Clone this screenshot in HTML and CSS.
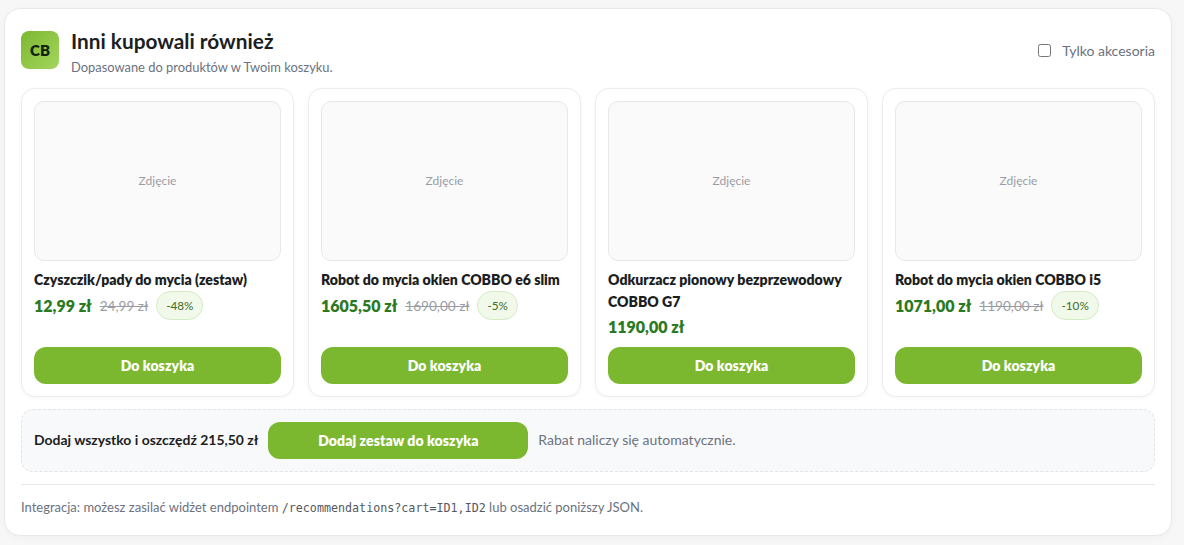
FILE: index.html
```html
<!DOCTYPE html>
<html lang="pl">
<head>
<meta charset="utf-8">
<title>Inni kupowali również</title>
<link rel="stylesheet" href="styles.css">
</head>
<body>
<section class="widget">
  <header class="head">
    <div class="logo">CB</div>
    <div class="head-text">
      <h2 class="title">Inni kupowali również</h2>
      <p class="sub">Dopasowane do produktów w Twoim koszyku.</p>
    </div>
    <label class="filter"><input type="checkbox" class="check"><span>Tylko akcesoria</span></label>
  </header>
  <div class="grid">
    <article class="card">
      <div class="photo">Zdjęcie</div>
      <h3 class="name">Czyszczik/pady do mycia (zestaw)</h3>
      <div class="prices"><span class="price">12,99 zł</span><s class="old">24,99 zł</s><span class="badge">-48%</span></div>
      <button class="btn">Do koszyka</button>
    </article>
    <article class="card">
      <div class="photo">Zdjęcie</div>
      <h3 class="name">Robot do mycia okien COBBO e6 slim</h3>
      <div class="prices"><span class="price">1605,50 zł</span><s class="old">1690,00 zł</s><span class="badge">-5%</span></div>
      <button class="btn">Do koszyka</button>
    </article>
    <article class="card">
      <div class="photo">Zdjęcie</div>
      <h3 class="name">Odkurzacz pionowy bezprzewodowy COBBO G7</h3>
      <div class="prices"><span class="price">1190,00 zł</span></div>
      <button class="btn">Do koszyka</button>
    </article>
    <article class="card">
      <div class="photo">Zdjęcie</div>
      <h3 class="name">Robot do mycia okien COBBO i5</h3>
      <div class="prices"><span class="price">1071,00 zł</span><s class="old">1190,00 zł</s><span class="badge">-10%</span></div>
      <button class="btn">Do koszyka</button>
    </article>
  </div>
  <div class="bundle">
    <strong class="bundle-text">Dodaj wszystko i oszczędź 215,50 zł</strong>
    <button class="btn btn-wide">Dodaj zestaw do koszyka</button>
    <span class="bundle-note">Rabat naliczy się automatycznie.</span>
  </div>
  <p class="foot">Integracja: możesz zasilać widżet endpointem <code class="code">/recommendations?cart=ID1,ID2</code> lub osadzić poniższy JSON.</p>
</section>
</body>
</html>
```

FILE: styles.css
```css
* { box-sizing: border-box; }
html, body { height: 100%; }
body {
  margin: 0;
  padding: 8px 12px 0 4px;
  background: #f7f7f8;
  font-family: Lato, "Liberation Sans", sans-serif;
  color: #1f2125;
  overflow: hidden;
}
.widget {
  height: 528px;
  background: #fff;
  border: 1px solid #e9e9ec;
  border-radius: 16px;
  padding: 16px;
  box-shadow: 0 2px 8px rgba(0,0,0,.03);
}
.head { display: flex; align-items: flex-start; gap: 12px; height: 63px; padding-top: 6px; }
.logo {
  width: 38px; height: 38px; border-radius: 8px;
  display: flex; align-items: center; justify-content: center;
  background: linear-gradient(135deg, #7cb82f, #a4d65e);
  font-weight: 800; font-size: 15px; color: #10240c;
}
.head-text { flex: 1; margin-top: -2px; }
.title { margin: 0; font-size: 20.8px; line-height: 24px; font-weight: 700; color: #1c1e22; }
.sub { margin: 6px 0 0; font-size: 12.9px; line-height: 16px; color: #6b7280; }
.filter { display: flex; align-items: center; gap: 11px; margin-top: 11px; font-size: 14px; color: #6b7280; }
.check { width: 13px; height: 13px; margin: 0; }
.grid { display: grid; grid-template-columns: repeat(4, 273px); gap: 14px; }
.card {
  height: 309px;
  display: flex; flex-direction: column;
  padding: 12px;
  border: 1px solid #ececef;
  border-radius: 14px;
  background: #fff;
  box-shadow: 0 1px 4px rgba(0,0,0,.04);
}
.photo {
  height: 160px; flex: none;
  display: flex; align-items: center; justify-content: center;
  padding-bottom: 1px;
  background: #fafafa;
  border: 1px solid #e8e8eb;
  border-radius: 10px;
  font-size: 12px; color: #9a9ca3;
}
.name { margin: 8px 0 0; font-size: 14.08px; line-height: 22px; font-weight: 800; color: #1c1e22; }
.prices { display: flex; align-items: center; gap: 8px; margin-top: 0; }
.price { font-size: 16px; font-weight: 800; color: #2a7a22; line-height: 28px; }
.old { font-size: 13.6px; color: #9a9ca3; }
.badge {
  font-size: 11.7px; line-height: 17px; color: #3f6b26;
  padding: 5px 9px;
  background: #f0f9ea;
  border: 1px solid #d5ebc4;
  border-radius: 999px;
}
.btn {
  margin-top: auto;
  height: 37px;
  border: 0;
  border-radius: 12px;
  background: #7cb82f;
  color: #fff;
  font-family: Lato, "Liberation Sans", sans-serif;
  font-size: 14px;
  font-weight: 800;
  letter-spacing: .08px;
}
.bundle {
  display: flex; align-items: center; gap: 10px;
  height: 63px; margin-top: 12px;
  padding: 0 12px;
  background: #f8f9fb;
  border: 1px dashed #e3e4e8;
  border-radius: 12px;
}
.bundle-text { font-size: 13.95px; font-weight: 700; color: #1c1e22; padding-bottom: 2px; }
.btn-wide { width: 260px; margin-top: 0; flex: none; }
.bundle-note { font-size: 14px; color: #6b7280; padding-bottom: 2px; }
.foot {
  margin: 12px 0 0;
  padding-top: 14px;
  border-top: 1px solid #e9e9ec;
  font-size: 13px; line-height: 16px; color: #6b7280;
}
.code { font-family: "DejaVu Sans Mono", monospace; font-size: 11.7px; color: #55585f; }
```
